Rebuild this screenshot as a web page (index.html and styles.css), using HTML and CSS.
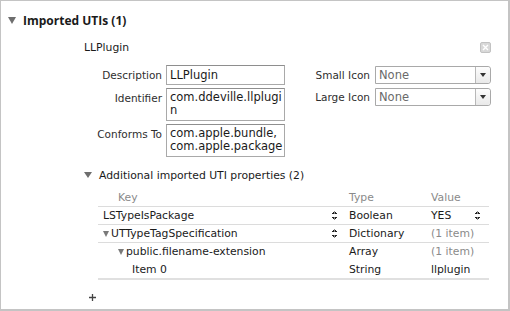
FILE: index.html
```html
<!DOCTYPE html>
<html lang="en">
<head>
    <meta charset="UTF-8">
    <title>Imported UTIs</title>
    <link rel="stylesheet" href="styles.css">
</head>
<body>
    <div class="panel">
        <div class="section-head">
            <span class="disclosure big"></span>
            <span class="section-title">Imported UTIs (1)</span>
        </div>

        <div class="uti">
            <div class="uti-title">
                <span>LLPlugin</span>
                <span class="btn-close">
                    <svg width="7" height="7" viewBox="0 0 7 7"><path d="M1 1L6 6M6 1L1 6" stroke="#fff" stroke-width="1.4"/></svg>
                </span>
            </div>

            <div class="uti-form">
                <div class="field-grid">
                    <label class="label">Description</label>
                    <div class="text-field">LLPlugin</div>
                    <label class="label">Identifier</label>
                    <div class="text-field tall">com.ddeville.llplugi<br>n</div>
                    <label class="label">Conforms To</label>
                    <div class="text-field tall">com.apple.bundle,<br>com.apple.package</div>
                </div>

                <div class="icon-grid">
                    <label class="label">Small Icon</label>
                    <div class="popup">
                        <span class="popup-value">None</span>
                        <span class="popup-arrow"></span>
                    </div>
                    <label class="label">Large Icon</label>
                    <div class="popup">
                        <span class="popup-value">None</span>
                        <span class="popup-arrow"></span>
                    </div>
                </div>
            </div>

            <div class="props-head">
                <span class="disclosure"></span>
                <span>Additional imported UTI properties (2)</span>
            </div>

            <div class="plist">
                <div class="plist-row plist-header">
                    <div class="col-key">Key</div>
                    <div class="col-type">Type</div>
                    <div class="col-value">Value</div>
                </div>
                <div class="plist-row">
                    <div class="col-key">LSTypeIsPackage<span class="stepper"></span></div>
                    <div class="col-type">Boolean</div>
                    <div class="col-value">YES<span class="stepper"></span></div>
                </div>
                <div class="plist-row">
                    <div class="col-key"><span class="disclosure small"></span>UTTypeTagSpecification<span class="stepper"></span></div>
                    <div class="col-type">Dictionary</div>
                    <div class="col-value muted">(1 item)</div>
                </div>
                <div class="plist-row no-line">
                    <div class="col-key indent-1"><span class="disclosure small"></span>public.filename-extension</div>
                    <div class="col-type">Array</div>
                    <div class="col-value muted">(1 item)</div>
                </div>
                <div class="plist-row last">
                    <div class="col-key indent-2">Item 0</div>
                    <div class="col-type">String</div>
                    <div class="col-value">llplugin</div>
                </div>
            </div>

            <div class="add-row">
                <svg width="7" height="7" viewBox="0 0 7 7"><path d="M3.5 0V7M0 3.5H7" stroke="#444" stroke-width="1.3"/></svg>
            </div>
        </div>
    </div>
</body>
</html>
```

FILE: styles.css
```css
:root {
    --border: #c4c4c4;
    --field-border: #a9a9a9;
    --text: #1a1a1a;
    --label: #2e2e2e;
    --muted: #8a8a8a;
    --triangle: #6e6e6e;
    --line: #dcdcdc;
}

*, *::before, *::after {
    box-sizing: border-box;
    margin: 0;
    padding: 0;
}

body {
    font-family: "DejaVu Sans", sans-serif;
    font-size: 10.5px;
    color: var(--text);
    background: #fff;
}

.panel {
    width: 510px;
    height: 311px;
    border: 1px solid var(--border);
    border-right-width: 2px;
    border-bottom-width: 2px;
    padding-top: 12px;
}

/* Disclosure triangles */
.disclosure {
    display: inline-block;
    width: 0;
    height: 0;
    border-left: 4px solid transparent;
    border-right: 4px solid transparent;
    border-top: 6px solid var(--triangle);
}
.disclosure.big {
    border-left-width: 4px;
    border-right-width: 4px;
    border-top-width: 7px;
}
.disclosure.small {
    border-left-width: 3.5px;
    border-right-width: 3.5px;
    border-top-width: 6px;
    margin-right: 2px;
    border-top-color: #7a7a7a;
}

.section-head {
    display: flex;
    align-items: center;
    gap: 7px;
    padding-left: 7px;
    height: 14px;
}
.section-title {
    font-family: "Open Sans", sans-serif;
    font-weight: bold;
    font-size: 12px;
}

.uti {
    margin-left: 83px;
    width: 408px;
}

.uti-title {
    display: flex;
    justify-content: space-between;
    align-items: center;
    margin-top: 13px;
    height: 14px;
    font-size: 10.8px;
}
.btn-close {
    width: 11px;
    height: 11px;
    border-radius: 2px;
    background: #d8d8d8;
    border: 1px solid #c2c2c2;
    display: flex;
    align-items: center;
    justify-content: center;
    margin-right: 1px;
}

.uti-form {
    display: flex;
    margin-top: 11px;
}

.field-grid {
    display: grid;
    grid-template-columns: 78px 119px;
    column-gap: 4px;
    row-gap: 3px;
    align-items: start;
}
.label {
    text-align: right;
    color: var(--label);
    padding-top: 4px;
}
.text-field {
    border: 1px solid var(--field-border);
    border-top-color: #8e8e8e;
    height: 20px;
    padding: 3px 3px 0;
    font-size: 11.5px;
    line-height: 13px;
    white-space: nowrap;
    overflow: hidden;
}
.text-field.tall {
    height: 33px;
    padding-top: 2px;
}

.icon-grid {
    display: grid;
    grid-template-columns: 64px 116px;
    column-gap: 5px;
    row-gap: 3px;
    margin-left: 21px;
    align-content: start;
}
.popup {
    display: flex;
    height: 18px;
    border: 1px solid var(--field-border);
    border-radius: 0 3px 3px 0;
    margin-top: 1px;
}
.popup-value {
    flex: 1;
    padding: 1px 3px 0;
    font-size: 11.5px;
    color: #6a6a6a;
    border-right: 1px solid #b8b8b8;
}
.popup-arrow {
    width: 14px;
    background: linear-gradient(#fdfdfd, #e9e9e9);
    border-radius: 0 3px 3px 0;
    position: relative;
}
.popup-arrow::after {
    content: "";
    position: absolute;
    left: 4px;
    top: 6px;
    border-left: 3px solid transparent;
    border-right: 3px solid transparent;
    border-top: 4px solid #333;
}

.props-head {
    display: flex;
    align-items: center;
    gap: 7px;
    margin-top: 11px;
    height: 14px;
    font-size: 10.8px;
}

/* Property list table */
.plist {
    margin-top: 6px;
    margin-left: 14px;
    width: 391px;
}
.plist-row {
    display: flex;
    height: 18px;
    align-items: center;
    border-bottom: 1px solid var(--line);
    font-size: 10.8px;
}
.plist-row.no-line {
    border-bottom-color: transparent;
}
.plist-row.last {
    height: 19px;
    border-bottom: 2px solid #e0e0e0;
}
.plist-header {
    color: var(--muted);
    height: 19px;
}
.col-key {
    width: 251px;
    padding-left: 5px;
    display: flex;
    align-items: center;
}
.plist-header .col-key {
    padding-left: 20px;
}
.col-key.indent-1 {
    padding-left: 20px;
}
.col-key.indent-2 {
    padding-left: 34px;
}
.col-type {
    width: 82px;
}
.col-value {
    flex: 1;
    display: flex;
    align-items: center;
}
.muted {
    color: var(--muted);
}

.stepper {
    margin-left: auto;
    margin-right: 12px;
    width: 5px;
    height: 9px;
    background:
        linear-gradient(to bottom right, transparent 50%, #222 50%) 0 0 / 2.5px 3px no-repeat,
        linear-gradient(to bottom left, transparent 50%, #222 50%) 2.5px 0 / 2.5px 3px no-repeat,
        linear-gradient(to top right, transparent 50%, #222 50%) 0 6px / 2.5px 3px no-repeat,
        linear-gradient(to top left, transparent 50%, #222 50%) 2.5px 6px / 2.5px 3px no-repeat;
}
.col-value .stepper {
    margin-right: 9px;
}

.add-row {
    margin-top: 14px;
    margin-left: 5px;
    height: 7px;
    display: flex;
}
```
